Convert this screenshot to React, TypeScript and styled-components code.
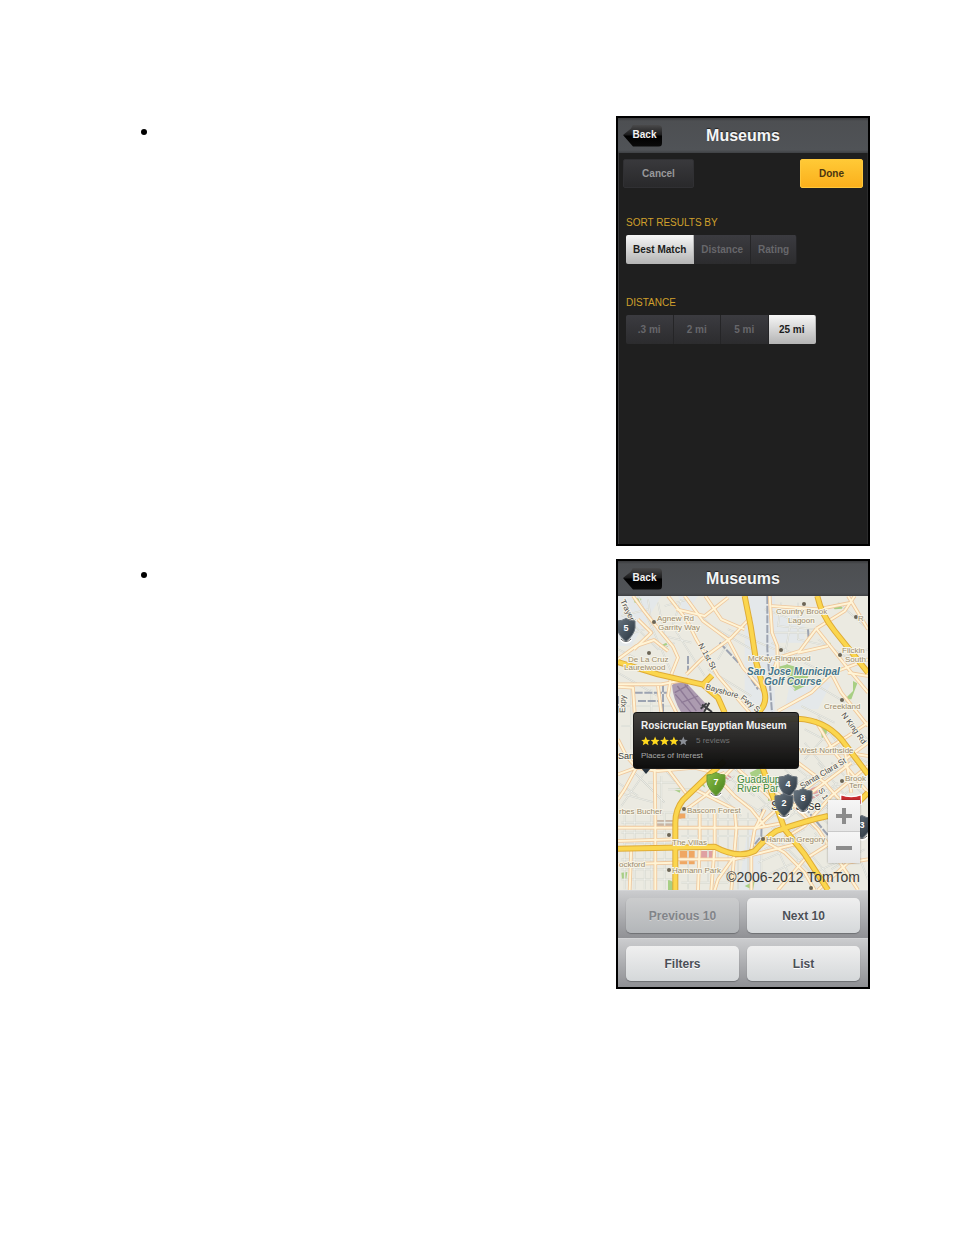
import React, { useState } from "react";
import styled, { createGlobalStyle, css } from "styled-components";

const GlobalStyle = createGlobalStyle`
  * { box-sizing: border-box; }
  body {
    margin: 0;
    background: #fff;
    font-family: "Liberation Sans", Arial, sans-serif;
  }
  button, input { font-family: inherit; }
`;

const Page = styled.main`
  padding: 116px 84px 116px 141px;
`;

const Steps = styled.ul`
  list-style: none;
  margin: 0;
  padding: 0;
  display: flex;
  flex-direction: column;
  gap: 13px;
`;

const Step = styled.li`
  display: flex;
  justify-content: space-between;
  align-items: flex-start;

  &::before {
    content: "";
    width: 6px;
    height: 6px;
    margin-top: 13px;
    border-radius: 50%;
    background: #000;
  }
`;

const Phone = styled.section<{ $dark?: boolean }>`
  width: 254px;
  min-height: 430px;
  border: 2px solid #000;
  background: ${(p) => (p.$dark ? "#1f1f1f" : "#909195")};
  box-shadow: ${(p) => (p.$dark ? "inset 1px 0 0 #3c3c3e, inset -1px 0 0 #2b2b2c" : "none")};
`;

const Header = styled.header`
  display: grid;
  grid-template-columns: 1fr auto 1fr;
  align-items: center;
  height: 35px;
  padding: 0 5px;
  background: linear-gradient(#3a3b3d, #4d4f52 3px, #505357 32px, #3f4144);
`;

const Title = styled.h1`
  margin: 0;
  font-size: 16px;
  line-height: 20px;
  font-weight: bold;
  color: #f4f5f6;
  text-shadow: 0 -1px 1px #222;
`;

const BackButton = styled.button`
  justify-self: start;
  width: 39px;
  height: 22px;
  padding: 0 4px 2px 8px;
  border: 0;
  border-radius: 4px;
  background: linear-gradient(#4a4a4b, #1c1c1d 45%, #000 50%, #0b0b0b);
  clip-path: polygon(0 48%, 8px 4px, 10px 0, 100% 0, 100% 100%, 10px 100%, 8px 90%);
  color: #f2f2f2;
  font-size: 10px;
  line-height: 14px;
  font-weight: bold;
  text-align: center;
`;

const Toolbar = styled.div`
  display: flex;
  justify-content: space-between;
  padding: 6px 5px 0;
`;

const FlatButton = styled.button<{ $primary?: boolean }>`
  height: 29px;
  width: ${(p) => (p.$primary ? 63 : 71)}px;
  padding: 0;
  border: 1px solid ${(p) => (p.$primary ? "#ffc83c" : "#303033")};
  border-radius: 2px;
  background: ${(p) =>
    p.$primary ? "linear-gradient(#ffc936, #fbb01c)" : "linear-gradient(#39393c, #29292b)"};
  color: ${(p) => (p.$primary ? "#4a3510" : "#98989a")};
  font-size: 10px;
  font-weight: bold;
`;

const FilterForm = styled.form`
  display: flex;
  flex-direction: column;
  align-items: flex-start;
  gap: 33px;
  padding: 29px 8px;
`;

const FilterGroup = styled.fieldset<{ $even?: boolean }>`
  display: flex;
  min-width: 0;
  width: ${(p) => (p.$even ? "190px" : "auto")};
  margin: 0;
  padding: 0;
  border: 0;
`;

const FilterLegend = styled.legend`
  margin-bottom: 6px;
  padding: 0;
  font-size: 10px;
  line-height: 12px;
  color: #d0a02c;
`;

const Segment = styled.label<{ $on: boolean; $even?: boolean }>`
  display: flex;
  flex: ${(p) => (p.$even ? "1 1 0" : "0 0 auto")};
  align-items: center;
  justify-content: center;
  height: 29px;
  padding: 0 ${(p) => (p.$even ? 0 : 7)}px;
  border-right: 1px solid #252527;
  background: linear-gradient(#3b3b40, #2c2c2e);
  color: #67676b;
  font-size: 10px;
  font-weight: bold;
  white-space: nowrap;

  &:first-of-type { border-radius: 2px 0 0 2px; }
  &:last-of-type { border-radius: 0 2px 2px 0; }

  ${(p) =>
    p.$on &&
    css`
      border-color: #b8b8b8;
      background: linear-gradient(#f6f6f6, #b4b4b4);
      color: #1c1c1c;
    `}
`;

const HiddenRadio = styled.input`
  appearance: none;
  width: 0;
  height: 0;
  margin: 0;
`;

const MapArea = styled.div`
  position: relative;
  aspect-ratio: 250 / 294;
  overflow: hidden;
`;

const MapDrawing = styled.svg`
  display: block;
  width: 100%;
  height: 100%;
`;

const Callout = styled.article`
  position: absolute;
  left: 15px;
  top: 116px;
  width: 166px;
  height: 57px;
  padding: 7px;
  border: 1px solid rgba(20, 20, 20, 0.8);
  border-radius: 4px;
  background: linear-gradient(rgba(58, 57, 54, 0.96), rgba(32, 31, 30, 0.95) 45%, rgba(6, 6, 6, 0.97));
`;

const CalloutTitle = styled.h2`
  margin: 0;
  color: #f1f1f1;
  font-size: 10px;
  line-height: 12px;
  white-space: nowrap;
`;

const CalloutRating = styled.div`
  display: flex;
  align-items: center;
  gap: 8px;
  height: 12px;
  margin: 3px 0;
  color: #747474;
  font-size: 8px;
  line-height: 12px;
`;

const CalloutText = styled.p`
  margin: 0;
  color: #a9a9a9;
  font-size: 8px;
  line-height: 12px;
`;

const ZoomControl = styled.div`
  position: absolute;
  right: 8px;
  top: 204px;
  width: 32px;
  display: grid;
  gap: 1px;
  background: #c9c9c9;
  box-shadow: 0 0 2px rgba(0, 0, 0, 0.35);
`;

const ZoomButton = styled.button`
  display: grid;
  place-items: center;
  height: 31px;
  padding: 0;
  border: 0;
  background: linear-gradient(#f6f6f6, #e6e6e6);
`;

const Attribution = styled.small`
  position: absolute;
  right: 8px;
  bottom: 5px;
  color: #3b3b38;
  font-size: 14px;
  line-height: 16px;
  white-space: nowrap;
`;

const ButtonBar = styled.nav`
  display: grid;
  grid-template-columns: 1fr 1fr;
  gap: 8px;
  padding: 7px 8px 5px;
  border-top: 1px solid #d3d4d6;
  background: linear-gradient(#cbccce, #909195);
`;

const BarButton = styled.button`
  height: 35px;
  padding: 0;
  border: 0;
  border-radius: 5px;
  background: linear-gradient(#efefef, #d5d8da);
  box-shadow: 0 1px 1px #6d6f73;
  color: #4b4f57;
  font-size: 12px;
  font-weight: bold;
  text-shadow: 0 1px 0 #fff;

  &:disabled {
    background: linear-gradient(#cbcccd, #b3b6b9);
    color: #818489;
    text-shadow: 0 1px 0 #d4d4d4;
  }
`;

/* Map geometry, drawn in a 750 x 882 grid */

const LANES = [
  "M0 160L60 190M0 230L120 300M60 0L170 250M120 20L140 120L220 140M170 100L260 240M20 330H160M10 390H150M40 260V460M100 280V350",
  "M250 60L330 140L300 190M280 90L400 160M270 220L400 300M330 100L470 160M440 40L520 70L500 180M450 110H590M460 140L540 180",
  "M490 20L480 90L590 100M540 20V130L630 150M660 20L740 90M600 130L680 180L750 160M560 200L640 240M600 270L700 330M460 210L530 280",
  "M560 400L750 500M600 360L700 500M640 400L560 490M660 460L750 530M560 440L640 540M700 390L750 430M550 330L650 380",
  "M0 560L60 600M0 590L110 620M10 630L80 530M40 520L140 620M90 560H180M140 520L210 600M130 540V660M150 580H240M100 650H230",
  "M10 680H170M10 710H160M15 740H170M20 640V880M50 640V880M80 680V880M100 640V880M140 650V880M10 790H170M10 820H170M10 850H180",
  "M210 640V880M240 620V850M270 650V860M300 640V850M330 620V860M360 640V880M390 650V850M190 670H420M190 720H440M190 790H380M190 830H350M190 860H330",
  "M230 570L300 620M250 610L350 540M310 530L410 600M350 600L430 650M300 590L370 660M340 510L460 610M380 520L330 610",
  "M420 600L540 730M440 560L590 700M470 540L650 700M500 520L680 680M540 520L700 640M410 650L590 530M440 680L640 530M460 700L660 560M500 720L700 580",
  "M430 730V860M460 720L520 850M490 740L600 850M540 730L650 860M590 710L700 840M440 760L560 700M420 800L600 720M440 840L660 740M520 860L700 780",
  "M20 120L110 90M50 90L120 160L170 140M90 10L100 80M140 30L210 10M190 10L160 100M10 60L90 40",
  "M600 500L700 620M640 500L740 600M560 560L720 500M580 600L750 540M690 700L750 850M640 820L740 760",
];

const STREETS = [
  "M45 0L78 45L130 110L165 152L180 185L160 235",
  "M0 190L55 150L108 132L150 165",
  "M60 70L100 110L48 160",
  "M150 0L205 70L235 130L300 240L395 350",
  "M200 0L255 75L330 130L375 215L440 290",
  "M175 40L260 60L330 5",
  "M400 62L340 125L250 190L205 235",
  "M262 0L310 70L380 100",
  "M455 0L462 110L478 150L480 240",
  "M460 30L600 40L700 20",
  "M595 98L545 165L480 185L460 240",
  "M595 98L700 230L750 290",
  "M595 98L680 45L710 0",
  "M540 170L630 150",
  "M690 0L750 100",
  "M640 232L580 290L480 345",
  "M640 232L670 290L750 390",
  "M690 230L750 240",
  "M750 190L640 232L560 235",
  "M0 265H130L210 250",
  "M0 272L45 275L50 350",
  "M120 270L130 350",
  "M160 235L150 300L175 350",
  "M0 535L55 515L120 525L230 515L290 530",
  "M0 430L25 480L55 515L20 580L0 610",
  "M110 520L112 660V882",
  "M150 520L210 600L250 560L320 530",
  "M0 695H420L500 680",
  "M0 735L170 730",
  "M205 640L260 600L350 510",
  "M275 520L350 600L400 640L440 690",
  "M230 580L350 640L355 700L340 882",
  "M290 650V750L280 882",
  "M245 640V750L240 882",
  "M360 520L440 590L500 650L700 500",
  "M410 700L465 650L560 580L750 440",
  "M430 560L520 620L600 700L660 790L720 882",
  "M540 500L620 560L690 640",
  "M480 740L560 690L640 600L750 510",
  "M550 470L690 470L750 480",
  "M680 460L700 590",
  "M590 370L650 470L750 590",
  "M750 380L690 420L610 470",
  "M0 805L170 800",
  "M40 750L35 882",
  "M175 790H350L430 770L550 740",
  "M350 780L300 850L290 882",
  "M400 775V882",
  "M430 730L500 770L560 830L590 882",
  "M480 882L560 790L640 740",
  "M600 882L690 800L750 790",
  "M440 640L410 700L400 760",
];

const HIGHWAYS = [
  "M380 0L398 90L415 200L440 290Q448 325 420 350",
  "M598 0Q610 55 650 105L750 230",
  "M0 198L120 235L255 266L300 305L320 350",
  "M255 266L282 238",
  "M415 375L540 368Q620 372 670 430L750 535",
  "M320 495L270 540L195 612Q172 640 172 680V882",
  "M0 758L290 752Q360 790 410 765Q445 725 475 705Q560 675 630 660",
  "M430 505L450 560L500 700L560 775L630 882",
  "M640 660L700 640L750 590",
];

const PARKS = [
  "M505 205L545 215L575 230L560 270L530 285L510 250Z",
  "M470 215L510 205L500 235L470 232Z",
  "M605 375L628 390L625 425L612 430Z",
  "M395 530L425 515L440 545L410 560Z",
  "M125 150L145 140L150 152L130 160Z",
  "M45 5L70 8L68 22L50 20Z",
  "M640 28L680 20L672 38L650 40Z",
  "M620 145L638 140L635 155Z",
  "M165 580L190 575L185 590Z",
  "M450 600L475 585L470 610L450 615Z",
  "M705 255L718 262L700 310L680 310L705 285Z",
  "M150 850L170 860L165 882H150Z",
  "M10 830L28 828L25 850L12 850Z",
  "M240 560L252 548L262 575Z",
  "M380 870L410 855L405 882Z",
];

const RAILS = ["M448 0V160L462 350", "M432 640L430 720L390 770", "M305 140L380 220L420 280", "M570 100L572 130", "M50 290H150M60 315H130M135 265V350M210 180V235", "M540 610L640 730", "M0 300V350"];

const MAP_LABELS: { x: number; y: number; text: string; size?: number; tone?: string; bold?: boolean; italic?: boolean; turn?: number }[] = [
  { x: 39, y: 25, text: "Agnew Rd" },
  { x: 40, y: 34, text: "Garrity Way" },
  { x: 10, y: 66, text: "De La Cruz" },
  { x: 6, y: 74, text: "Laurelwood" },
  { x: 158, y: 18, text: "Country Brook" },
  { x: 170, y: 27, text: "Lagoon" },
  { x: 130, y: 65, text: "McKay-Ringwood" },
  { x: 224, y: 57, text: "Flickin" },
  { x: 227, y: 66, text: "South" },
  { x: 240, y: 25, text: "R" },
  { x: 206, y: 113, text: "Creekland" },
  { x: 181, y: 157, text: "West Northside" },
  { x: 227, y: 185, text: "Brook" },
  { x: 231, y: 192, text: "Terr" },
  { x: 1, y: 218, text: "rbes Bucher" },
  { x: 69, y: 217, text: "Bascom Forest" },
  { x: 54, y: 249, text: "The Villas" },
  { x: 54, y: 277, text: "Hamann Park" },
  { x: 1, y: 271, text: "ockford" },
  { x: 148, y: 246, text: "Hannah Gregory" },
  { x: 129, y: 79, text: "San Jose Municipal", size: 10, tone: "#44748c", bold: true, italic: true },
  { x: 146, y: 89, text: "Golf Course", size: 10, tone: "#44748c", bold: true, italic: true },
  { x: 119, y: 187, text: "Guadalup", size: 10, tone: "#3f8a3c" },
  { x: 119, y: 196, text: "River Par", size: 10, tone: "#3f8a3c" },
  { x: 0, y: 163, text: "San", size: 9, tone: "#3c3c3c" },
  { x: 153, y: 214, text: "San Jose", size: 12, tone: "#333" },
  { x: 80, y: 49, text: "N 1st St", tone: "#4a4a4a", turn: 61 },
  { x: 87, y: 93, text: "Bayshore", tone: "#4a4a4a", turn: 16 },
  { x: 122, y: 103, text: "Fwy S", tone: "#4a4a4a", turn: 38 },
  { x: 2, y: 5, text: "Trayeri", tone: "#4a4a4a", turn: 64 },
  { x: 7, y: 117, text: "Expy", tone: "#4a4a4a", turn: -88 },
  { x: 223, y: 119, text: "N King Rd", tone: "#4a4a4a", turn: 54 },
  { x: 184, y: 193, text: "Santa Clara St", tone: "#4a4a4a", turn: -31 },
  { x: 200, y: 194, text: "S 1", tone: "#4a4a4a", turn: 60 },
];

const DOTS = [[36, 26], [31, 57], [163, 54], [186, 8], [222, 59], [238, 21], [224, 104], [224, 185], [66, 213], [51, 239], [51, 274], [145, 243], [193, 292]];

const PINS = [
  { x: 8, y: 34, n: "5" },
  { x: 98, y: 188, n: "7", green: true },
  { x: 170, y: 190, n: "4" },
  { x: 185, y: 204, n: "8" },
  { x: 166, y: 209, n: "2" },
  { x: 244, y: 231, n: "3" },
];

function Pin({ x, y, n, green }: { x: number; y: number; n: string; green?: boolean }) {
  return (
    <g transform={`translate(${x} ${y})`}>
      <path d="M-5 9.500Q0 15 5 9.500" fill="none" stroke="#fff" strokeWidth="3" />
      <path d="M-5 9Q0 14 5 9" fill="none" stroke="#555" strokeWidth="1" />
      <path
        d="M0 -11.500Q4 -9 9 -9V-2Q8 5 0 11.500Q-8 5 -9 -2V-9Q-4 -9 0 -11.500Z"
        fill={green ? "url(#pinGreen)" : "url(#pinSlate)"}
        stroke={green ? "#6a9739" : "#69727b"}
        strokeWidth="1"
      />
      <text y="1" fill="#fff" fontSize="9" fontWeight="bold" textAnchor="middle">{n}</text>
    </g>
  );
}

function StreetMap() {
  return (
    <MapDrawing viewBox="0 0 250 294" preserveAspectRatio="xMidYMid slice" role="img" aria-label="Map of San Jose">
      <defs>
        <linearGradient id="pinSlate" x1="0" y1="0" x2="1" y2="1">
          <stop offset="0" stopColor="#697681" />
          <stop offset="1" stopColor="#27323d" />
        </linearGradient>
        <linearGradient id="pinGreen" x1="0" y1="0" x2="1" y2="1">
          <stop offset="0" stopColor="#8cbf48" />
          <stop offset="1" stopColor="#46811c" />
        </linearGradient>
      </defs>
      <rect width="250" height="294" fill="#ebeae1" />
      <svg width="250" height="294" viewBox="0 0 750 882">
        <path d="M0 0H130L40 150H0ZM380 0H470V350H380ZM180 0H240L200 60ZM470 60H560V140H470ZM520 240L640 260L600 340H500ZM390 700H430V882H360Z" fill="#e4e8ea" />
        <g fill="#a8cf84">{PARKS.map((d) => <path key={d} d={d} />)}</g>
        <path d="M115 672H165V695H115Z" fill="#c9b5a4" />
        <path d="M185 765H230V805H185ZM180 650H202V668H180Z" fill="#efa763" />
        <path d="M242 765H292V795H262L242 785ZM320 530L345 545L335 555L318 545ZM570 580L600 570L605 600L580 610Z" fill="#dfa0a2" />
        <g fill="none" stroke="#d0d2ca" strokeWidth="5">{LANES.map((d) => <path key={d} d={d} />)}</g>
        <g fill="none" stroke="#f8f8f3" strokeWidth="2">{LANES.map((d) => <path key={d} d={d} />)}</g>
        <path d="M162 268Q180 250 205 260L262 322L255 350H190Q165 310 162 268Z" fill="#ac9bb0" />
        <path d="M178 270L235 345M200 265L250 330M172 295L220 350M170 290L210 268M190 320L240 300" stroke="#8e7a96" strokeWidth="4" fill="none" />
        <g fill="none" stroke="#9ca3b1" strokeWidth="6" strokeDasharray="24 5">{RAILS.map((d) => <path key={d} d={d} />)}</g>
        <g fill="none" stroke="#efc79c" strokeWidth="11" strokeLinejoin="round">{STREETS.map((d) => <path key={d} d={d} />)}</g>
        <g fill="none" stroke="#fff4d6" strokeWidth="6" strokeLinejoin="round">{STREETS.map((d) => <path key={d} d={d} />)}</g>
        <g fill="none" stroke="#dfac36" strokeWidth="18" strokeLinejoin="round">{HIGHWAYS.map((d) => <path key={d} d={d} />)}</g>
        <g fill="none" stroke="#fbd64e" strokeWidth="12" strokeLinejoin="round">{HIGHWAYS.map((d) => <path key={d} d={d} />)}</g>
        <path d="M252 326L282 348M274 320L258 348M248 338L266 322" stroke="#3e3e42" strokeWidth="6" />
        <path d="M668 596Q700 608 730 596V625H668Z" fill="#c92c30" stroke="#fff" strokeWidth="4" />
      </svg>
      {DOTS.map(([x, y]) => <circle key={`${x}-${y}`} cx={x} cy={y} r="2" fill="#6c6555" />)}
      {MAP_LABELS.map((l) => (
        <text
          key={l.text}
          transform={`translate(${l.x} ${l.y}) rotate(${l.turn ?? 0})`}
          fontSize={l.size ?? 8}
          fontWeight={l.bold ? "bold" : "normal"}
          fontStyle={l.italic ? "italic" : "normal"}
          fill={l.tone ?? "#9a8a6b"}
          stroke="#f7f4e8"
          strokeWidth="2"
          strokeLinejoin="round"
          paintOrder="stroke"
        >
          {l.text}
        </text>
      ))}
      <path d="M23 172L28 178L33 172Z" fill="#27323d" />
      {PINS.map((p) => <Pin key={p.n} {...p} />)}
    </MapDrawing>
  );
}

function Stars({ value }: { value: number }) {
  return (
    <svg width="47" height="10" viewBox="0 0 47 10" role="img" aria-label={`${value} of 5 stars`}>
      {[0, 1, 2, 3, 4].map((i) => (
        <path
          key={i}
          transform={`translate(${i * 9.4} 0)`}
          d="M4.7 .6L6 3.7L9.2 3.9L6.8 6L7.6 9.2L4.7 7.5L1.8 9.2L2.6 6L.2 3.9L3.4 3.7Z"
          fill={i < value ? "#ffd91e" : "#8b8f96"}
        />
      ))}
    </svg>
  );
}

function PhoneHeader() {
  return (
    <Header>
      <BackButton type="button">Back</BackButton>
      <Title>Museums</Title>
    </Header>
  );
}

function Choice({ legend, name, options, initial, even }: {
  legend: string;
  name: string;
  options: string[];
  initial: string;
  even?: boolean;
}) {
  const [value, setValue] = useState(initial);
  return (
    <FilterGroup $even={even}>
      <FilterLegend>{legend}</FilterLegend>
      {options.map((o) => (
        <Segment key={o} $on={o === value} $even={even}>
          <HiddenRadio type="radio" name={name} value={o} checked={o === value} onChange={() => setValue(o)} />
          {o}
        </Segment>
      ))}
    </FilterGroup>
  );
}

export default function App() {
  return (
    <Page>
      <GlobalStyle />
      <Steps>
        <Step>
          <Phone $dark>
            <PhoneHeader />
            <Toolbar>
              <FlatButton type="button">Cancel</FlatButton>
              <FlatButton type="button" $primary>Done</FlatButton>
            </Toolbar>
            <FilterForm>
              <Choice legend="SORT RESULTS BY" name="sort" options={["Best Match", "Distance", "Rating"]} initial="Best Match" />
              <Choice legend="DISTANCE" name="distance" options={[".3 mi", "2 mi", "5 mi", "25 mi"]} initial="25 mi" even />
            </FilterForm>
          </Phone>
        </Step>
        <Step>
          <Phone>
            <PhoneHeader />
            <MapArea>
              <StreetMap />
              <Callout>
                <CalloutTitle>Rosicrucian Egyptian Museum</CalloutTitle>
                <CalloutRating>
                  <Stars value={4} />
                  5 reviews
                </CalloutRating>
                <CalloutText>Places of Interest</CalloutText>
              </Callout>
              <ZoomControl>
                <ZoomButton type="button" aria-label="Zoom in">
                  <svg width="16" height="16" viewBox="0 0 16 16"><path d="M8 0V16M0 8H16" stroke="#8c8c8c" strokeWidth="4" /></svg>
                </ZoomButton>
                <ZoomButton type="button" aria-label="Zoom out">
                  <svg width="16" height="16" viewBox="0 0 16 16"><path d="M0 8H16" stroke="#8c8c8c" strokeWidth="4" /></svg>
                </ZoomButton>
              </ZoomControl>
              <Attribution>©2006-2012 TomTom</Attribution>
            </MapArea>
            <ButtonBar>
              <BarButton type="button" disabled>Previous 10</BarButton>
              <BarButton type="button">Next 10</BarButton>
            </ButtonBar>
            <ButtonBar>
              <BarButton type="button">Filters</BarButton>
              <BarButton type="button">List</BarButton>
            </ButtonBar>
          </Phone>
        </Step>
      </Steps>
    </Page>
  );
}
